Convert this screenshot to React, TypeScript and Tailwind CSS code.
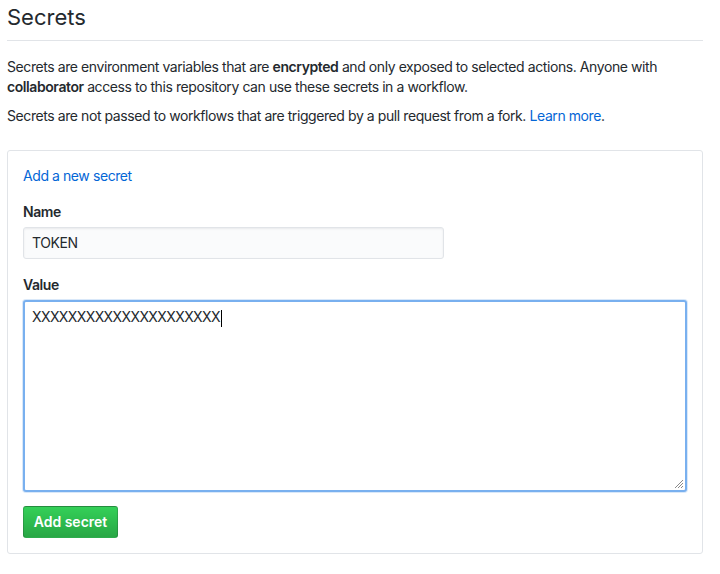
export default function App() {
  return (
    <div
      className="min-h-[574px] w-[720px] bg-white pl-[7px] pr-[17px] text-[14px] leading-[20px] tracking-[-0.42px] text-[#24292e]"
      style={{ fontFamily: "Inter, 'Liberation Sans', sans-serif" }}
    >
      <div className="border-b border-[#e1e4e8] pt-[2px] pb-[8px]">
        <h2 className="text-[22px] leading-[30px] font-normal tracking-normal">Secrets</h2>
      </div>

      <p className="mt-[16px]">
        Secrets are environment variables that are <strong className="font-semibold">encrypted</strong> and only
        exposed to selected actions. Anyone with <strong className="font-semibold">collaborator</strong> access to
        this repository can use these secrets in a workflow.
      </p>
      <p className="mt-[9px]">
        Secrets are not passed to workflows that are triggered by a pull request from a fork.{" "}
        <a href="#" className="text-[#0366d6]">
          Learn more
        </a>
        .
      </p>

      <div className="mt-[24px] rounded-[3px] border border-[#e1e4e8] p-[15px]">
        <a href="#" className="block text-[#0366d6]">
          Add a new secret
        </a>

        <label className="mt-[16px] block font-semibold">Name</label>
        <div className="mt-[5px] flex h-[32px] w-[421px] items-center rounded-[3px] border border-[#e1e4e8] bg-[#fafbfc] px-[8px] shadow-[inset_0_1px_2px_rgba(27,31,35,0.075)]">
          TOKEN
        </div>

        <label className="mt-[16px] block font-semibold">Value</label>
        <div className="relative mt-[5px] h-[192px] w-full rounded-[3px] border-2 border-[#79b0ef] bg-white px-[7px] py-[5px] shadow-[0_0_0_1px_rgba(3,102,214,0.15)]">
          <span className="tracking-[-0.6px]">XXXXXXXXXXXXXXXXXXXXX</span>
          <span className="ml-[1px] inline-block h-[17px] w-[1px] bg-black align-middle" />
          <svg
            className="absolute right-[1px] bottom-[1px]"
            width="11"
            height="11"
            viewBox="0 0 11 11"
          >
            <path d="M10 2 L2 10 M10 5 L5 10 M10 8 L8 10" stroke="#8a8a8a" strokeWidth="1" />
          </svg>
        </div>

        <button className="mt-[14px] h-[32px] w-[95px] rounded-[3px] border border-[rgba(27,31,35,0.2)] bg-gradient-to-b from-[#34d058] to-[#28a745] font-semibold tracking-normal text-white">
          Add secret
        </button>
      </div>
    </div>
  );
}
